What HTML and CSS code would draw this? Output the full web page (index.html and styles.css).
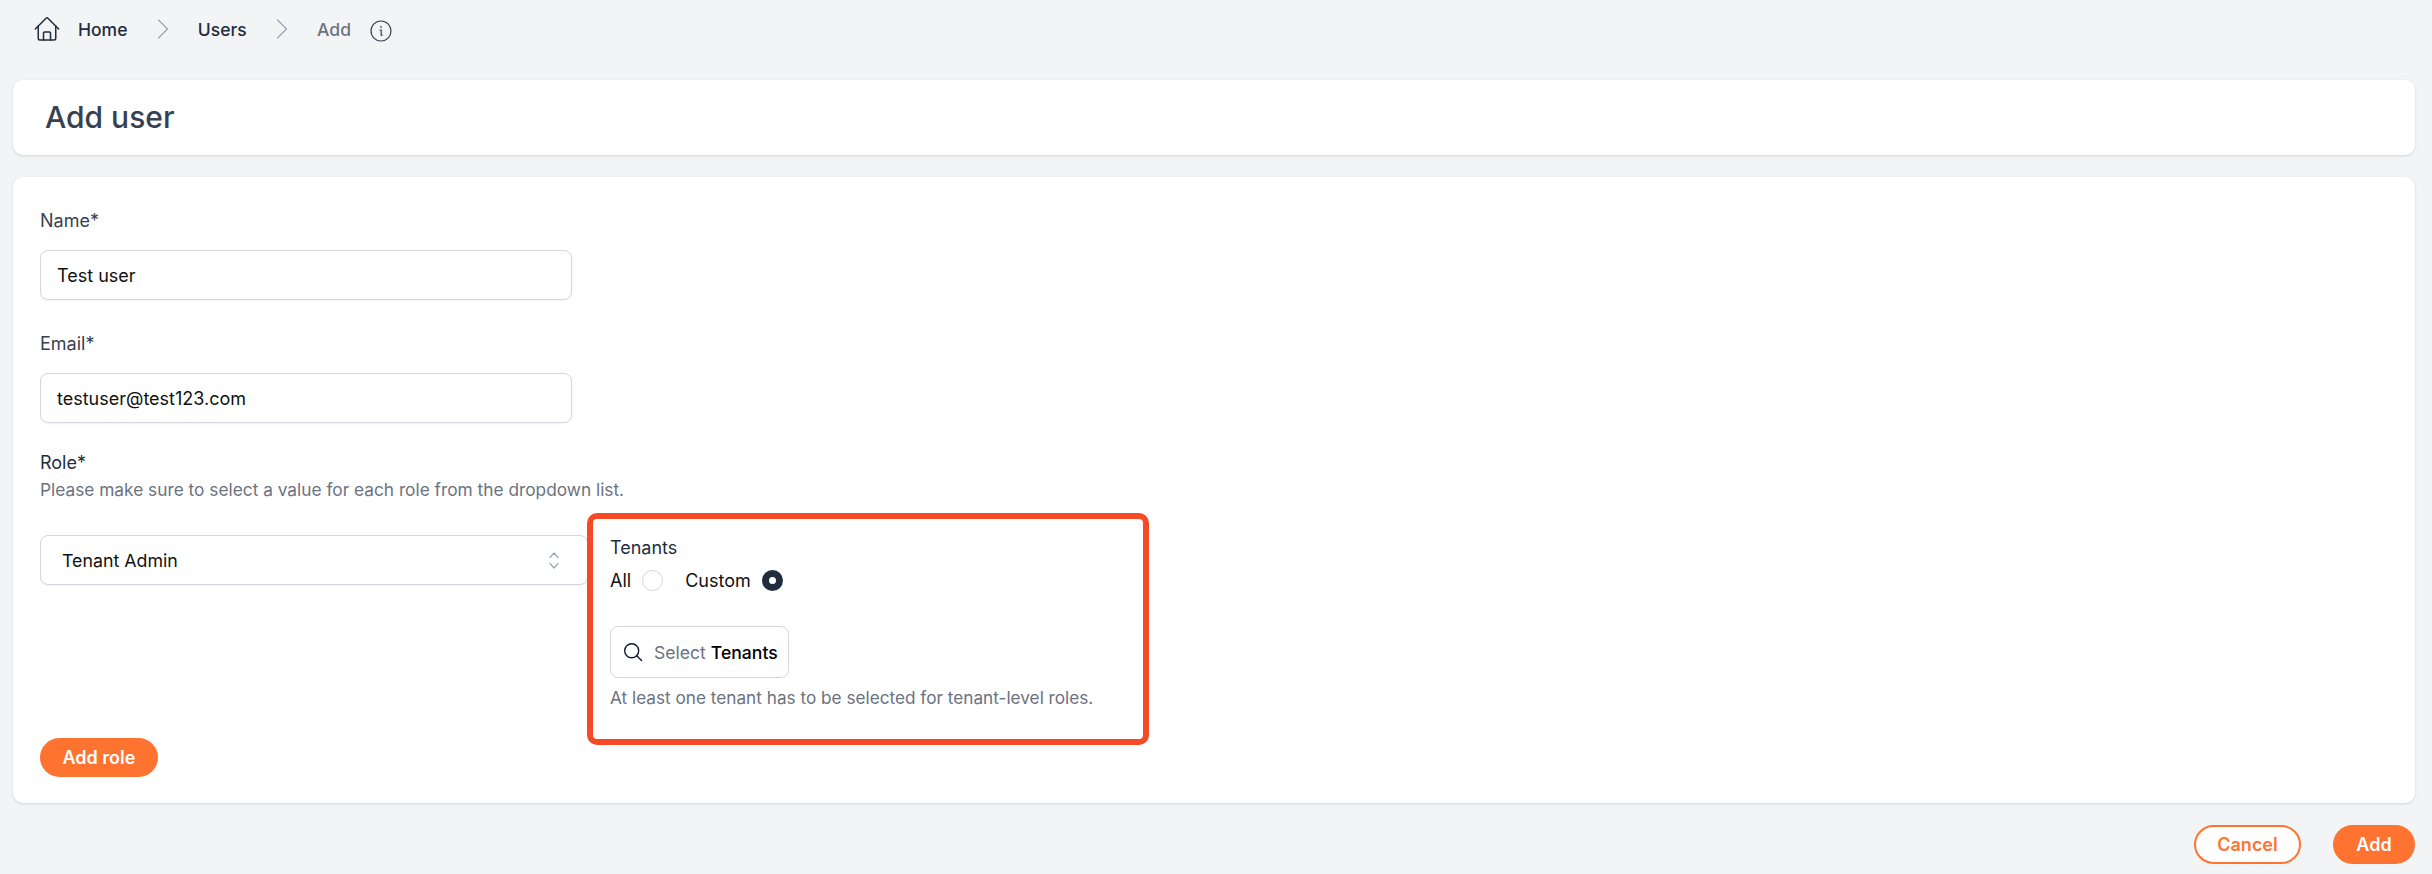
FILE: index.html
```html
<!DOCTYPE html>
<html lang="en">
<head>
<meta charset="utf-8">
<title>Add user</title>
<link rel="stylesheet" href="styles.css">
</head>
<body>
<nav class="crumbs">
  <svg class="home" viewBox="0 0 24 24" fill="none" stroke="#1f2d3d" stroke-width="1.3" stroke-linecap="round" stroke-linejoin="round"><path d="M2 12 11.2 2.8a1.1 1.1 0 0 1 1.6 0L22 12"/><path d="M4.5 9.5V20a1.5 1.5 0 0 0 1.5 1.500h12a1.500 1.500 0 0 0 1.500-1.500V9.500"/><path d="M9 21.500V15.500a1 1 0 0 1 1-1h4a1 1 0 0 1 1 1v6"/></svg>
  <span class="crumb home-label">Home</span>
  <svg class="chev" viewBox="0 0 12 20" fill="none" stroke="#9ca3af" stroke-width="1.2" stroke-linecap="round" stroke-linejoin="round"><path d="M1.500 1 10.500 10 1.500 19"/></svg>
  <span class="crumb users-label">Users</span>
  <svg class="chev" viewBox="0 0 12 20" fill="none" stroke="#9ca3af" stroke-width="1.2" stroke-linecap="round" stroke-linejoin="round"><path d="M1.500 1 10.500 10 1.500 19"/></svg>
  <span class="crumb current">Add</span>
  <svg class="info" viewBox="0 0 22 22" fill="none" stroke="#374151" stroke-width="1.200" stroke-linecap="round"><circle cx="11" cy="11" r="10"/><path d="M10 10h1.200v5.200h1"/><path d="M11 6.800v.3" stroke-width="1.600"/></svg>
</nav>

<header class="card title-card"><h1>Add user</h1></header>

<main class="card form-card">
  <div class="field">
    <label class="label">Name*</label>
    <div class="input">Test user</div>
  </div>
  <div class="field email">
    <label class="label">Email*</label>
    <div class="input">testuser@test123.com</div>
  </div>
  <div class="role-head">
    <div class="label dark">Role*</div>
    <div class="hint">Please make sure to select a value for each role from the dropdown list.</div>
  </div>
  <div class="role-row">
    <div class="select">
      <span>Tenant Admin</span>
      <svg class="updown" viewBox="0 0 10 17" fill="none" stroke="#9ca3af" stroke-width="1.200" stroke-linecap="round" stroke-linejoin="round"><path d="M1 5.500 5 1 9 5.500"/><path d="M1 11.500 5 16 9 11.500"/></svg>
    </div>
    <section class="tenants">
      <div class="t-title">Tenants</div>
      <div class="radios">
        <span>All</span><i class="radio"></i>
        <span class="custom">Custom</span><i class="radio on"></i>
      </div>
      <div class="picker">
        <svg class="search" viewBox="0 0 20 20" fill="none" stroke="#111827" stroke-width="1.400" stroke-linecap="round"><circle cx="8.700" cy="8.700" r="7"/><path d="m13.800 13.800 4.700 4.700"/></svg>
        <span class="muted">Select</span>&nbsp;<b>Tenants</b>
      </div>
      <div class="hint t-hint">At least one tenant has to be selected for tenant-level roles.</div>
    </section>
  </div>
  <button class="btn solid add-role">Add role</button>
</main>

<footer class="actions">
  <button class="btn outline">Cancel</button>
  <button class="btn solid add">Add</button>
</footer>
</body>
</html>
```
FILE: styles.css
```css
* { box-sizing: border-box; }
html, body { margin: 0; height: 100%; }
body {
  background: #f3f4f6;
  font-family: Inter, "Liberation Sans", sans-serif;
  color: #111827;
  font-size: 18px;
  padding: 0 17px 0 13px;
  overflow: hidden;
}
.crumbs { display: flex; align-items: center; height: 58px; padding: 0 0 0 20px; margin-bottom: 22px; }
.home { width: 28px; height: 28px; margin-right: 17px; }
.crumb { font-size: 17.500px; color: #1f2d3d; font-weight: 450; }
.crumb.current { color: #6b7280; }
.chev { width: 12px; height: 20px; margin: 0 29.200px; }
.info { width: 22px; height: 22px; margin: 4px 0 0 19px; }
.card { background: #fff; border-radius: 10px; box-shadow: 0 1px 3px rgba(0,0,0,.14); }
.title-card { height: 75px; padding: 0 32px 2px; display: flex; align-items: center; margin-bottom: 22px; }
h1 { margin: 0; font-size: 30px; font-weight: 500; color: #374151; }
.form-card { height: 626px; padding: 31px 27px 0; }
.label { font-size: 18px; line-height: 26px; color: #374151; font-weight: 400; display: block; }
.label.dark { color: #1f2d3d; }
.input {
  width: 532px; height: 50px; margin-top: 16px; padding: 0 16px;
  border: 1.500px solid #d4d5dd; border-radius: 8px; display: flex; align-items: center;
  font-size: 18px; box-shadow: 0 1px 2px rgba(0,0,0,.05); color: #111;
}
.email { margin-top: 31px; }
.role-head { margin-top: 27px; }
.hint { font-size: 17.300px; color: #6b7280; line-height: 26px; margin-top: 1px; }
.role-row { position: relative; margin-top: 32px; height: 203px; }
.select {
  width: 548px; height: 50px; padding: 0 28px 0 21px;
  border: 1.500px solid #d4d5dd; border-radius: 8px; display: flex; align-items: center; justify-content: space-between;
  box-shadow: 0 1px 2px rgba(0,0,0,.05); color: #111; font-size: 17.800px;
}
.updown { width: 10px; height: 17px; }
.tenants {
  position: absolute; left: 547px; top: -22px; width: 562px; height: 232px;
  background: #fff; border: 6px solid #f64a26; border-radius: 10px; padding: 16px 17px;
}
.t-title { line-height: 26px; color: #1f2d3d; }
.radios { display: flex; align-items: center; height: 32px; margin-top: 3px; color: #111; }
.radio { width: 21px; height: 21px; border-radius: 50%; border: 1.500px solid #d4d5dd; margin-left: 11px; display: block; }
.radio.on { border: 7px solid #1f2d3d; background: #fff; }
.custom { margin-left: 22px; }
.picker {
  display: flex; align-items: center; width: 179px; height: 52px; margin-top: 30px; padding-left: 12px;
  border: 1.500px solid #d4d5dd; border-radius: 8px; white-space: pre; color: #000; font-size: 17.600px;
}
.search { width: 20px; height: 20px; margin-right: 11px; flex: none; }
.muted { color: #6b7280; }
.picker b { font-weight: 500; }
.hint.t-hint { margin-top: 7px; font-size: 17.200px; }
.btn { font: 600 18px Inter, "Liberation Sans", sans-serif; border-radius: 999px; height: 39px; padding: 0; display: flex; align-items: center; justify-content: center; }
.solid { background: #ff7330; border: 0; color: #fff; }
.add-role { width: 118px; }
.actions { display: flex; justify-content: flex-end; gap: 32px; margin-top: 22px; }
.outline { width: 107px; background: #fff; border: 2px solid #ff7330; color: #ff7330; }
.add { width: 82px; }
```
